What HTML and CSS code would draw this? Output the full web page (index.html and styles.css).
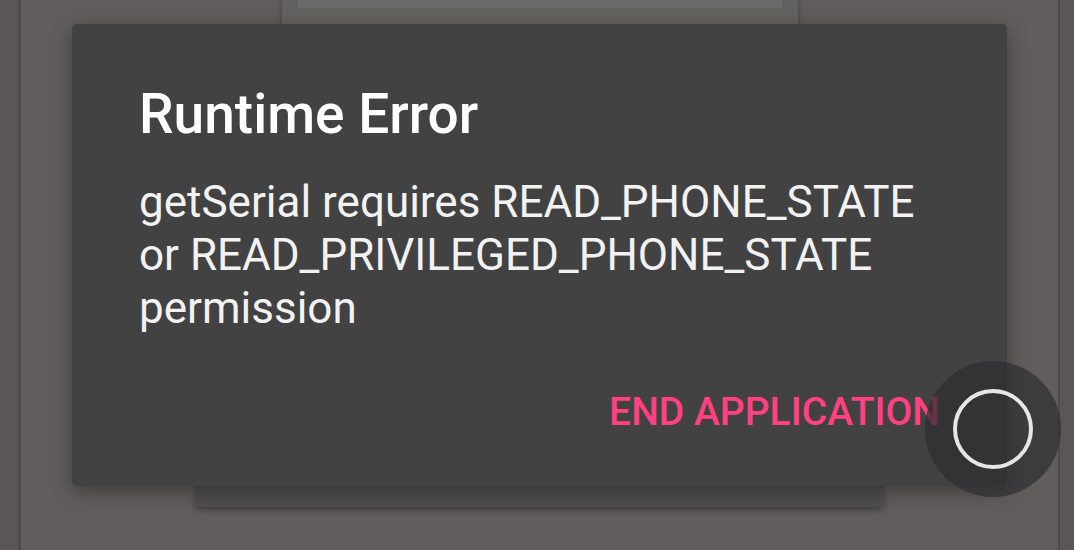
FILE: index.html
```html
<!DOCTYPE html>
<html>
<head>
<meta charset="utf-8">
<link rel="stylesheet" href="styles.css">
</head>
<body>
<div class="screen">
  <div class="edge edge-left"></div>
  <div class="content">
    <div class="top-panel"><div class="top-inner"></div></div>
    <div class="bottom-card"></div>
  </div>
  <div class="edge edge-right"></div>

  <div class="dialog">
    <div class="title">Runtime Error</div>
    <div class="message">getSerial requires READ_PHONE_STATE or READ_PRIVILEGED_PHONE_STATE permission</div>
    <div class="actions"><span class="btn">END APPLICATION</span></div>
  </div>

  <div class="touch"><div class="ring"></div></div>
</div>
</body>
</html>
```
FILE: styles.css
```css
html, body {
  margin: 0;
  padding: 0;
}
body {
  width: 1074px;
  height: 550px;
  overflow: hidden;
  font-family: Roboto, "Noto Sans", sans-serif;
}
.screen {
  position: relative;
  display: flex;
  width: 1074px;
  height: 550px;
  background: #615d5d;
}
.edge {
  width: 18px;
  background: #5a5656;
}
.edge-left {
  border-right: 3px solid #4e4a4a;
}
.edge-right {
  width: 14px;
  border-left: 2px solid #4e4a4a;
}
.content {
  flex: 1;
  display: flex;
  flex-direction: column;
  align-items: center;
}
.top-panel {
  width: 516px;
  height: 240px;
  background: #636060;
  box-shadow: 0 0 6px rgba(0,0,0,0.35);
  display: flex;
  justify-content: center;
}
.top-inner {
  width: 484px;
  height: 8px;
  background: #6b6969;
}
.bottom-card {
  margin-top: auto;
  margin-bottom: 43px;
  width: 687px;
  height: 120px;
  background: #504e4e;
  border-radius: 3px;
  box-shadow: 0 3px 6px rgba(0,0,0,0.35);
}
.dialog {
  position: absolute;
  left: 72px;
  top: 24px;
  width: 935px;
  box-sizing: border-box;
  padding: 58px 67px 48px 67px;
  background: #424242;
  border-radius: 5px;
  box-shadow: 0 6px 20px rgba(0,0,0,0.35);
}
.title {
  font-size: 55px;
  line-height: 64px;
  font-weight: 500;
  color: #ffffff;
}
.message {
  margin-top: 30px;
  font-size: 44px;
  line-height: 53px;
  color: #f2f2f2;
}
.actions {
  margin-top: 51px;
  display: flex;
  justify-content: flex-end;
}
.btn {
  font-size: 39px;
  line-height: 52px;
  font-weight: 500;
  color: #ff4081;
}
.touch {
  position: absolute;
  left: 925px;
  top: 361px;
  width: 136px;
  height: 136px;
  border-radius: 50%;
  background: rgba(46, 46, 50, 0.72);
  display: flex;
  align-items: center;
  justify-content: center;
}
.ring {
  width: 72px;
  height: 72px;
  border-radius: 50%;
  border: 4px solid #e6e6e6;
}
```
